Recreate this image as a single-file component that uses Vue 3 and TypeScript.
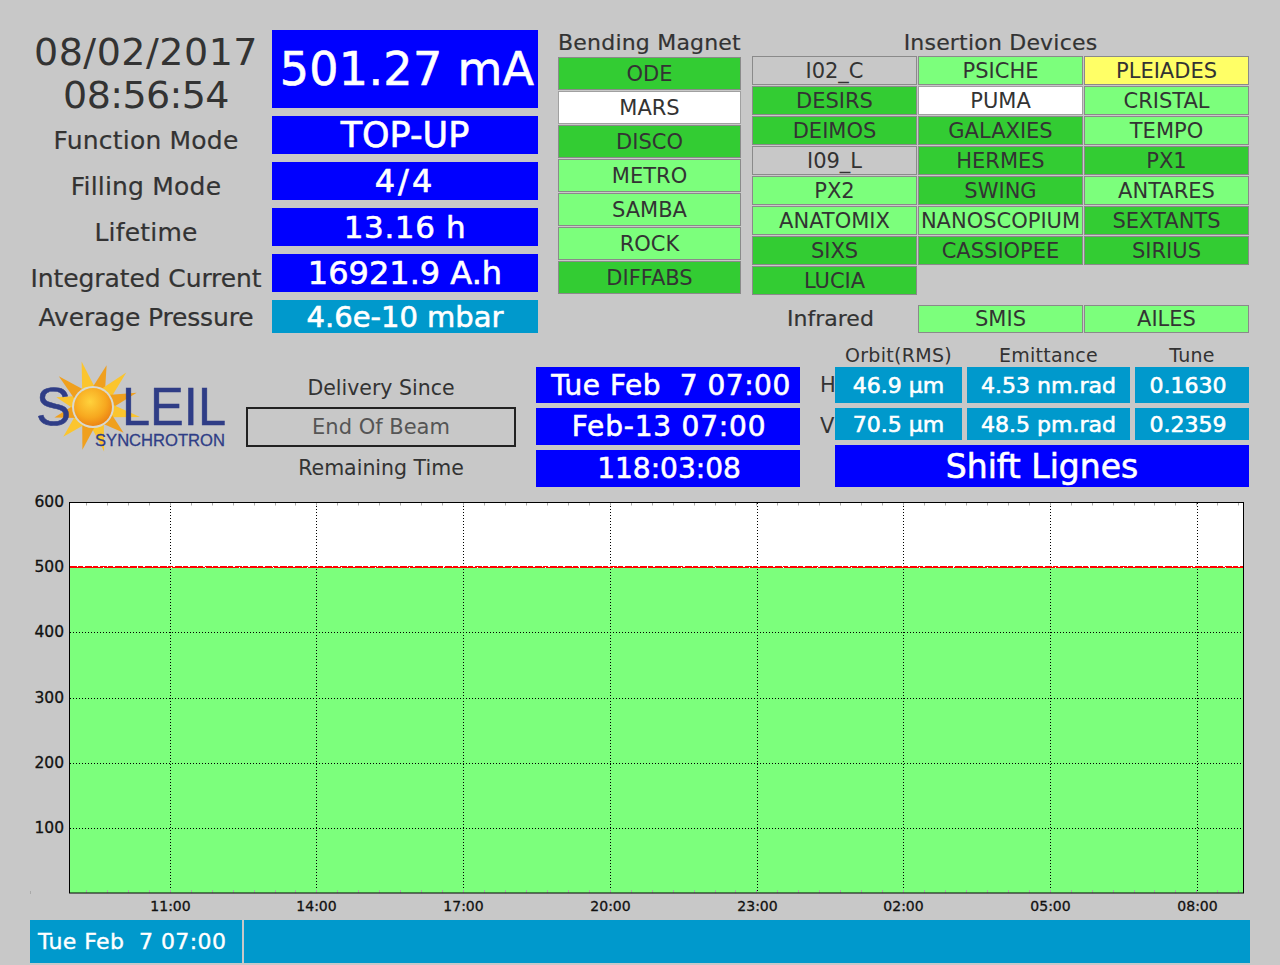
<script setup lang="ts">
type Status = "on" | "ok" | "off" | "idle" | "warn";

interface Line {
  name: string;
  status: Status;
}

interface Reading {
  label: string;
  value: string;
  size: number;
  spacing?: number;
  teal?: boolean;
}

const readings: Reading[] = [
  { label: "Function Mode", value: "TOP-UP", size: 35 },
  { label: "Filling Mode", value: "4/4", size: 32, spacing: 3 },
  { label: "Lifetime", value: "13.16 h", size: 31, spacing: 0.6 },
  { label: "Integrated Current", value: "16921.9 A.h", size: 32 },
  { label: "Average Pressure", value: "4.6e-10 mbar", size: 29, teal: true },
];

const bending: Line[] = [
  { name: "ODE", status: "on" },
  { name: "MARS", status: "off" },
  { name: "DISCO", status: "on" },
  { name: "METRO", status: "ok" },
  { name: "SAMBA", status: "ok" },
  { name: "ROCK", status: "ok" },
  { name: "DIFFABS", status: "on" },
];

const insertion: Line[] = [
  { name: "I02_C", status: "idle" },
  { name: "PSICHE", status: "ok" },
  { name: "PLEIADES", status: "warn" },
  { name: "DESIRS", status: "on" },
  { name: "PUMA", status: "off" },
  { name: "CRISTAL", status: "ok" },
  { name: "DEIMOS", status: "on" },
  { name: "GALAXIES", status: "on" },
  { name: "TEMPO", status: "ok" },
  { name: "I09_L", status: "idle" },
  { name: "HERMES", status: "on" },
  { name: "PX1", status: "on" },
  { name: "PX2", status: "ok" },
  { name: "SWING", status: "on" },
  { name: "ANTARES", status: "ok" },
  { name: "ANATOMIX", status: "ok" },
  { name: "NANOSCOPIUM", status: "ok" },
  { name: "SEXTANTS", status: "on" },
  { name: "SIXS", status: "on" },
  { name: "CASSIOPEE", status: "on" },
  { name: "SIRIUS", status: "on" },
  { name: "LUCIA", status: "on" },
];

// two spaces, as the control system prints a one digit day
const deliveryDate = "Tue Feb  7 07:00";

// sun rays of the logo, [angle in degrees, length]
const sunCx = 93;
const sunCy = 407;
const rays: [number, number][] = [
  [-104, 47], [-72, 44], [-46, 48], [-18, 46], [12, 48], [40, 40],
  [76, 46], [104, 44], [135, 42], [165, 40], [195, 38], [222, 46],
];

function rayPoints(angle: number, len: number): string {
  const a = (angle * Math.PI) / 180;
  const w = 0.36;
  const base = 19;
  const pts = [
    [sunCx + base * Math.cos(a - w), sunCy + base * Math.sin(a - w)],
    [sunCx + len * Math.cos(a), sunCy + len * Math.sin(a)],
    [sunCx + base * Math.cos(a + w), sunCy + base * Math.sin(a + w)],
  ];
  return pts.map((p) => p[0].toFixed(1) + "," + p[1].toFixed(1)).join(" ");
}

const left = 69.5;
const right = 1243.5;
const top = 502.5;
const bottom = 893;

const yAxis = [
  { label: "600", y: 502 },
  { label: "500", y: 567 },
  { label: "400", y: 632 },
  { label: "300", y: 698 },
  { label: "200", y: 763 },
  { label: "100", y: 828 },
];

const hours = ["11:00", "14:00", "17:00", "20:00", "23:00", "02:00", "05:00", "08:00"];
const hourX = [170, 316, 463, 610, 757, 903, 1050, 1197];
const xAxis = hours.map((label, i) => ({ label, x: hourX[i] + 0.5 }));

const minorTicks: number[] = [];
for (let x = 86; x < right; x += 20.95) {
  minorTicks.push(Math.round(x) + 0.5);
}
</script>

<template>
  <div class="page">
    <section class="top">
      <div class="status">
        <div class="clock">
          <div>08/02/2017</div>
          <div class="clock-time">08:56:54</div>
        </div>
        <div class="value current">501.27 mA</div>
        <template v-for="r in readings" :key="r.label">
          <div class="label">{{ r.label }}</div>
          <div
            class="value"
            :class="{ teal: r.teal }"
            :style="{ fontSize: r.size + 'px', letterSpacing: (r.spacing || 0) + 'px' }"
          >{{ r.value }}</div>
        </template>
      </div>

      <div class="bending">
        <div class="group-title">Bending Magnet</div>
        <div class="line-list">
          <div v-for="l in bending" :key="l.name" class="line" :class="l.status">{{ l.name }}</div>
        </div>
      </div>

      <div class="insertion">
        <div class="group-title">Insertion Devices</div>
        <div class="line-grid">
          <div v-for="l in insertion" :key="l.name" class="line" :class="l.status">{{ l.name }}</div>
        </div>
        <div class="infrared">
          <div class="infrared-title">Infrared</div>
          <div class="line ok">SMIS</div>
          <div class="line ok">AILES</div>
        </div>
      </div>
    </section>

    <section class="mid">
      <svg class="logo" viewBox="36 360 192 92" width="192" height="92">
        <defs>
          <radialGradient id="sunDisc" cx="0.42" cy="0.36" r="0.7">
            <stop offset="0" stop-color="#ffd23c" />
            <stop offset="0.6" stop-color="#f7a81f" />
            <stop offset="1" stop-color="#ea7d12" />
          </radialGradient>
        </defs>
        <polygon
          v-for="(r, i) in rays"
          :key="i"
          :points="rayPoints(r[0], r[1])"
          :fill="i % 2 ? '#f0a01e' : '#fbc52e'"
        />
        <circle :cx="sunCx" :cy="sunCy" r="21" fill="#d9d9d0" />
        <circle :cx="sunCx" :cy="sunCy" r="19" fill="url(#sunDisc)" />
        <text x="36" y="425" class="logo-big" textLength="35" lengthAdjust="spacingAndGlyphs">S</text>
        <text x="122" y="425" class="logo-big" textLength="104" lengthAdjust="spacingAndGlyphs">LEIL</text>
        <text x="95" y="446" class="logo-small" textLength="130" lengthAdjust="spacingAndGlyphs">SYNCHROTRON</text>
      </svg>

      <div class="delivery">
        <div class="delivery-label">Delivery Since</div>
        <div class="beam-box">End Of Beam</div>
        <div class="delivery-label">Remaining Time</div>
      </div>

      <div class="times">
        <div class="value time-1">{{ deliveryDate }}</div>
        <div class="value time-2 wide">Feb-13 07:00</div>
        <div class="value time-2">118:03:08</div>
      </div>

      <div class="metrics">
        <div></div>
        <div class="metric-title">Orbit(RMS)</div>
        <div class="metric-title">Emittance</div>
        <div class="metric-title">Tune</div>
        <div class="plane">H</div>
        <div class="value metric">46.9 µm</div>
        <div class="value metric">4.53 nm.rad</div>
        <div class="value metric tune">0.1630</div>
        <div class="plane">V</div>
        <div class="value metric">70.5 µm</div>
        <div class="value metric">48.5 pm.rad</div>
        <div class="value metric tune">0.2359</div>
        <div></div>
        <div class="value shift">Shift Lignes</div>
      </div>
    </section>

    <svg class="chart" viewBox="0 490 1280 425" width="1280" height="425">
      <rect :x="left" :y="top" :width="right - left" :height="bottom - top" fill="#fff" />
      <rect :x="left" y="568" :width="right - left" :height="bottom - 568" fill="#7cff7c" />
      <line
        v-for="t in yAxis.slice(2)"
        :key="t.label"
        x1="70"
        :x2="right"
        :y1="t.y + 0.5"
        :y2="t.y + 0.5"
        class="grid"
      />
      <line
        v-for="t in xAxis"
        :key="t.label"
        :x1="t.x"
        :x2="t.x"
        y1="503"
        :y2="bottom"
        class="grid"
      />
      <line x1="70" :x2="right" y1="566.5" y2="566.5" stroke="#f00" stroke-dasharray="7 1 5 2" />
      <line x1="70" :x2="right" y1="567.5" y2="567.5" stroke="#f00" stroke-dasharray="33 1" />
      <template v-for="x in minorTicks" :key="x">
        <line :x1="x" :x2="x" :y1="top" :y2="top + 3" class="tick" />
        <line :x1="x" :x2="x" :y1="bottom - 3" :y2="bottom" class="tick" />
      </template>
      <line x1="30.5" x2="30.5" y1="891" y2="894" class="tick" />
      <rect :x="left" :y="top" :width="right - left" :height="bottom - top" fill="none" stroke="#000" />
      <text v-for="t in yAxis" :key="t.label" x="64" :y="t.y + 5" text-anchor="end" class="axis y-axis">{{ t.label }}</text>
      <text v-for="t in xAxis" :key="t.label" :x="t.x" y="911" text-anchor="middle" class="axis">{{ t.label }}</text>
    </svg>

    <footer class="footer">
      <div class="footer-date">{{ deliveryDate }}</div>
      <div class="footer-rest"></div>
    </footer>
  </div>
</template>

<style>
html,
body {
  margin: 0;
  background: #c8c8c8;
}
</style>

<style scoped>
.page {
  width: 1280px;
  height: 965px;
  padding-top: 30px;
  box-sizing: border-box;
  overflow: hidden;
  background: #c8c8c8;
  color: #333;
  font-family: "DejaVu Sans", sans-serif;
}

.top {
  display: flex;
  height: 303px;
}

.status {
  display: grid;
  grid-template-columns: 232px 266px;
  grid-template-rows: 78px 38px 38px 38px 38px 33px;
  column-gap: 10px;
  row-gap: 8px;
  margin-left: 30px;
}

.clock {
  font-size: 38px;
  line-height: 43px;
  letter-spacing: 0.5px;
  text-align: center;
  margin-top: 1px;
  white-space: nowrap;
}

.clock-time {
  letter-spacing: -0.6px;
}

.label {
  font-size: 25px;
  line-height: 30px;
  letter-spacing: 0.2px;
  padding-top: 10px;
  text-align: center;
  white-space: nowrap;
  -webkit-text-stroke: 0.2px #333;
}

.label:nth-last-child(4) {
  letter-spacing: -0.1px;
}

.label:nth-last-child(2) {
  padding-top: 3px;
  letter-spacing: -0.15px;
}

.value {
  display: flex;
  align-items: center;
  justify-content: center;
  background: #00f;
  color: #fff;
  white-space: pre;
  -webkit-text-stroke: 0.6px #fff;
}

.teal {
  background: #09c;
}

.current {
  font-size: 46px;
  letter-spacing: 0.3px;
  padding-left: 4px;
}

.bending {
  width: 183px;
  margin-left: 20px;
}

.group-title {
  height: 26px;
  font-size: 22px;
  line-height: 26px;
  letter-spacing: 0.2px;
  text-align: center;
  white-space: nowrap;
  -webkit-text-stroke: 0.2px #333;
}

.line-list {
  display: flex;
  flex-direction: column;
  gap: 1px;
  margin-top: 1px;
}

.line-list .line {
  height: 33px;
}

.line {
  display: flex;
  align-items: center;
  justify-content: center;
  box-sizing: border-box;
  border: 1px solid #8a8a8a;
  font-size: 21px;
  white-space: nowrap;
  overflow: hidden;
}

.on {
  background: #3c3;
}

.ok {
  background: #7cff7c;
}

.off {
  background: #fff;
  border-color: #a0a0a0;
}

.idle {
  background: #c8c8c8;
}

.warn {
  background: #ff6;
}

.insertion {
  width: 497px;
  margin-left: 11px;
}

.line-grid {
  display: grid;
  grid-template-columns: repeat(3, 165px);
  grid-auto-rows: 29px;
  gap: 1px;
}

.infrared {
  display: grid;
  grid-template-columns: repeat(3, 165px);
  grid-template-rows: 28px;
  gap: 1px;
  margin-top: 10px;
}

.infrared-title {
  font-size: 22px;
  line-height: 28px;
  text-align: center;
  padding-right: 8px;
  white-space: nowrap;
  -webkit-text-stroke: 0.2px #333;
}

.mid {
  display: flex;
  height: 145px;
  margin-top: 12px;
}

.logo {
  display: block;
  margin-left: 36px;
  margin-top: 15px;
  flex: none;
  overflow: visible;
}

.delivery {
  width: 270px;
  margin-left: 18px;
  padding-top: 31px;
  text-align: center;
}

.delivery-label {
  height: 22px;
  font-size: 20.5px;
  line-height: 24px;
  white-space: nowrap;
}

.beam-box {
  box-sizing: border-box;
  height: 40px;
  margin: 9px 0;
  border: 2px solid #222;
  font-size: 21px;
  line-height: 36px;
  color: #555;
}

.times {
  display: flex;
  flex-direction: column;
  gap: 5px;
  width: 264px;
  margin-left: 20px;
  padding-top: 22px;
}

.time-1 {
  height: 36px;
  font-size: 28px;
  letter-spacing: 0.5px;
  padding-left: 6px;
}

.time-2 {
  height: 37px;
  font-size: 28px;
  padding-left: 2px;
}

.wide {
  letter-spacing: 0.8px;
}

.metrics {
  display: grid;
  grid-template-columns: 10px 127px 163px 114px;
  grid-template-rows: 17px 36px 32px 42px;
  column-gap: 5px;
  row-gap: 5px;
  margin-left: 20px;
}

.metric-title {
  font-size: 19px;
  line-height: 20px;
  letter-spacing: 0.3px;
  text-align: center;
  white-space: nowrap;
}

.plane {
  width: 15px;
  overflow: hidden;
  font-size: 21px;
  line-height: 36px;
}

.metric {
  font-size: 22px;
  background: #09c;
}

.tune {
  padding-right: 8px;
}

.shift {
  grid-column: 2 / 5;
  font-size: 33px;
}

.chart {
  display: block;
}

.grid {
  stroke: #000;
  stroke-width: 1;
  stroke-dasharray: 1 2;
}

.tick {
  stroke: #aaa;
}

.axis {
  font-size: 14px;
  fill: #111;
  stroke: #111;
  stroke-width: 0.3px;
}

.y-axis {
  font-size: 15.5px;
}

.logo-big {
  font-family: "Liberation Sans", sans-serif;
  font-size: 53px;
  fill: #2f3d86;
  stroke: #2f3d86;
  stroke-width: 0.5px;
}

.logo-small {
  font-family: "Liberation Sans", sans-serif;
  font-size: 17px;
  fill: #2f3d86;
  stroke: #2f3d86;
  stroke-width: 0.3px;
}

.footer {
  display: flex;
  gap: 2px;
  height: 43px;
  margin: 5px 0 0 30px;
  color: #fff;
}

.footer-date {
  width: 212px;
  box-sizing: border-box;
  padding-left: 8px;
  background: #09c;
  font-size: 22px;
  letter-spacing: 0.4px;
  line-height: 43px;
  white-space: pre;
  -webkit-text-stroke: 0.4px #fff;
}

.footer-rest {
  width: 1006px;
  background: #09c;
}
</style>
